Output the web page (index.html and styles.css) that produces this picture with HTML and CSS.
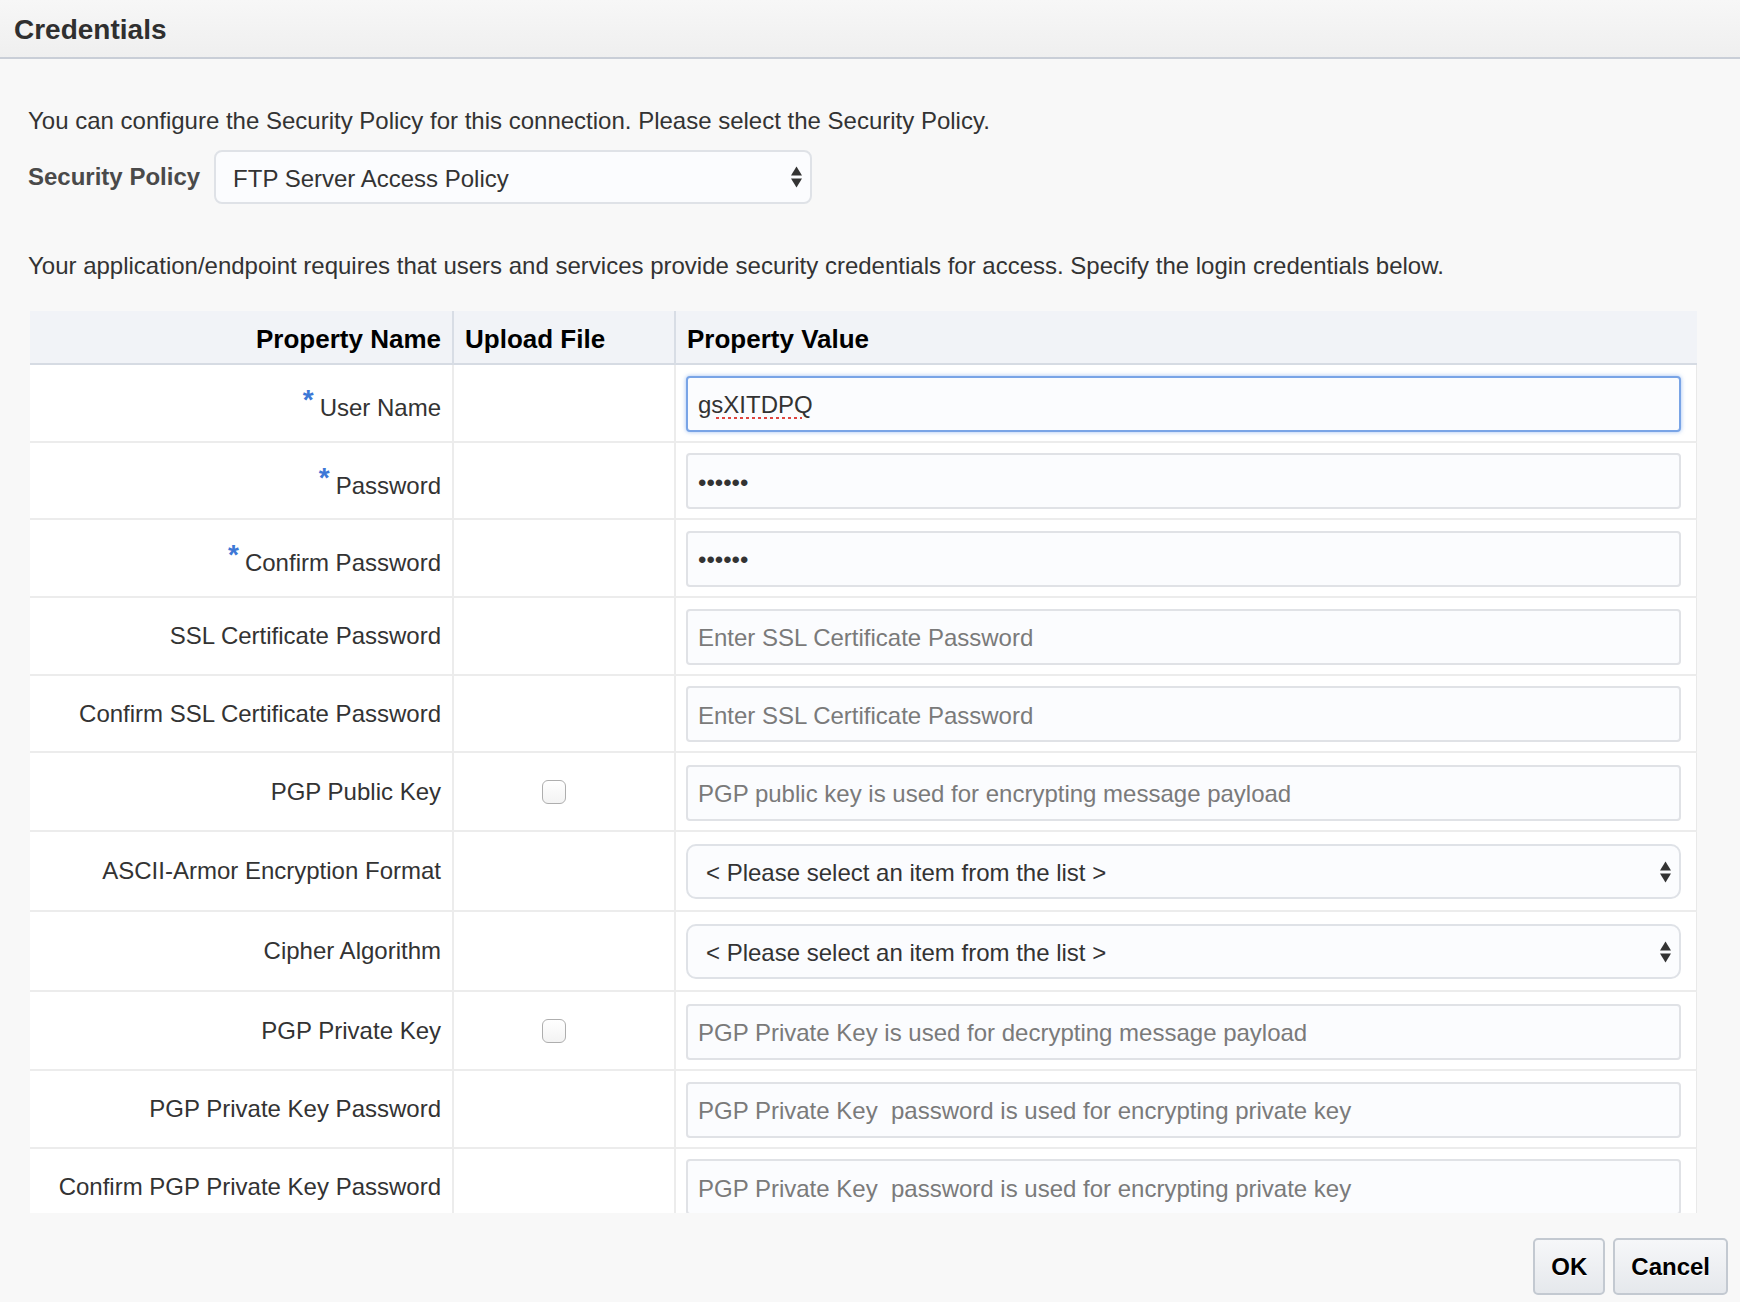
FILE: index.html
```html
<!DOCTYPE html>
<html lang="en">
<head>
<meta charset="utf-8">
<title>Credentials</title>
<link rel="stylesheet" href="styles.css">
</head>
<body>
<div class="dialog">
  <header class="titlebar"><h1 class="title">Credentials</h1></header>
  <main class="content">
    <p class="intro intro-first">You can configure the Security Policy for this connection. Please select the Security Policy.</p>
    <div class="policy-row">
      <label class="policy-label" for="policy">Security Policy</label>
      <div class="select-wrap policy-wrap">
        <select id="policy" class="select policy-select"><option>FTP Server Access Policy</option></select>
        <svg class="updown" width="11" height="22" viewBox="0 0 11 22" aria-hidden="true"><path d="M5.5 0.5L11 9.5H0Z"/><path d="M0 12.5H11L5.5 21.5Z"/></svg>
      </div>
    </div>
    <p class="intro intro-second">Your application/endpoint requires that users and services provide security credentials for access. Specify the login credentials below.</p>
    <div class="table-scroll">
      <table class="props">
        <colgroup><col class="col-name"><col class="col-upload"><col class="col-value"></colgroup>
        <thead>
          <tr><th class="c-name">Property Name</th><th class="c-upload">Upload File</th><th class="c-value">Property Value</th></tr>
        </thead>
        <tbody>
          <tr class="r-text">
            <td class="c-name"><span class="req">*</span>User Name</td><td class="c-upload"></td>
            <td class="c-value"><input class="field is-focused spell" type="text" value="gsXITDPQ"></td>
          </tr>
          <tr class="r-text">
            <td class="c-name"><span class="req">*</span>Password</td><td class="c-upload"></td>
            <td class="c-value"><input class="field" type="password" value="123456"></td>
          </tr>
          <tr class="r-text">
            <td class="c-name"><span class="req">*</span>Confirm Password</td><td class="c-upload"></td>
            <td class="c-value"><input class="field" type="password" value="123456"></td>
          </tr>
          <tr class="r-text">
            <td class="c-name">SSL Certificate Password</td><td class="c-upload"></td>
            <td class="c-value"><input class="field" type="text" placeholder="Enter SSL Certificate Password"></td>
          </tr>
          <tr class="r-text">
            <td class="c-name">Confirm SSL Certificate Password</td><td class="c-upload"></td>
            <td class="c-value"><input class="field" type="text" placeholder="Enter SSL Certificate Password"></td>
          </tr>
          <tr class="r-check">
            <td class="c-name">PGP Public Key</td><td class="c-upload"><input class="check" type="checkbox"></td>
            <td class="c-value"><input class="field" type="text" placeholder="PGP public key is used for encrypting message payload"></td>
          </tr>
          <tr class="r-select">
            <td class="c-name">ASCII-Armor Encryption Format</td><td class="c-upload"></td>
            <td class="c-value"><div class="select-wrap"><select class="select field-select"><option>&lt; Please select an item from the list &gt;</option></select><svg class="updown" width="11" height="22" viewBox="0 0 11 22" aria-hidden="true"><path d="M5.5 0.5L11 9.5H0Z"/><path d="M0 12.5H11L5.5 21.5Z"/></svg></div></td>
          </tr>
          <tr class="r-select">
            <td class="c-name">Cipher Algorithm</td><td class="c-upload"></td>
            <td class="c-value"><div class="select-wrap"><select class="select field-select"><option>&lt; Please select an item from the list &gt;</option></select><svg class="updown" width="11" height="22" viewBox="0 0 11 22" aria-hidden="true"><path d="M5.5 0.5L11 9.5H0Z"/><path d="M0 12.5H11L5.5 21.5Z"/></svg></div></td>
          </tr>
          <tr class="r-check">
            <td class="c-name">PGP Private Key</td><td class="c-upload"><input class="check" type="checkbox"></td>
            <td class="c-value"><input class="field" type="text" placeholder="PGP Private Key is used for decrypting message payload"></td>
          </tr>
          <tr class="r-text">
            <td class="c-name">PGP Private Key Password</td><td class="c-upload"></td>
            <td class="c-value"><input class="field" type="text" placeholder="PGP Private Key  password is used for encrypting private key"></td>
          </tr>
          <tr class="r-text">
            <td class="c-name">Confirm PGP Private Key Password</td><td class="c-upload"></td>
            <td class="c-value"><input class="field" type="text" placeholder="PGP Private Key  password is used for encrypting private key"></td>
          </tr>
        </tbody>
      </table>
    </div>
  </main>
  <footer class="footer">
    <button class="btn" type="button">OK</button>
    <button class="btn" type="button">Cancel</button>
  </footer>
</div>
</body>
</html>
```
FILE: styles.css
```css
* { box-sizing: border-box; }

html, body {
  margin: 0;
  padding: 0;
}

body {
  background: #f8f8f8;
  font-family: "Liberation Sans", Arial, Helvetica, sans-serif;
  font-size: 24px;
  color: #333;
}

.dialog {
  width: 1740px;
  height: 1302px;
  display: flex;
  flex-direction: column;
  overflow: hidden;
}

.titlebar {
  height: 59px;
  flex: none;
  background: linear-gradient(#f7f7f7, #efefef);
  border-bottom: 2px solid #c9ced7;
  display: flex;
  align-items: center;
  padding: 2px 0 0 14px;
}

.title {
  margin: 0;
  font-size: 28px;
  font-weight: bold;
  color: #2f2f2f;
  line-height: 55px;
}

.content {
  flex: none;
  padding: 0 43px 0 28px;
}

.intro {
  margin: 0;
  line-height: 30px;
  color: #333;
}

.intro-first { margin-top: 47px; }
.intro-second { margin-top: 47px; }

.policy-row {
  margin-top: 14px;
  height: 54px;
  display: flex;
  align-items: center;
  gap: 14px;
}

.policy-label {
  font-weight: bold;
  color: #4a4a4a;
  font-size: 24px;
}

.select-wrap {
  position: relative;
}

.policy-wrap { width: 598px; }

.select {
  appearance: none;
  -webkit-appearance: none;
  width: 100%;
  font-family: inherit;
  font-size: 24px;
  color: #333;
  background: #fbfcfe;
  border: 2px solid #dfe2e7;
  outline: none;
  margin: 0;
}

.policy-select {
  height: 54px;
  border-radius: 8px;
  padding: 2px 30px 0 17px;
}

.updown {
  position: absolute;
  right: 10px;
  top: 50%;
  transform: translateY(-50%);
  fill: #333;
}

.table-scroll {
  margin-top: 30px;
  margin-left: 2px;
  height: 902px;
  overflow: hidden;
}

.props {
  width: 1667px;
  table-layout: fixed;
  border-collapse: separate;
  border-spacing: 0;
}

.col-name { width: 424px; }
.col-upload { width: 222px; }
.col-value { width: 1021px; }

.props th {
  height: 54px;
  background: #f1f3f7;
  border-bottom: 2px solid #d6dbe3;
  font-size: 26px;
  font-weight: bold;
  color: #000;
  text-align: left;
  padding: 4px 11px 0;
  vertical-align: middle;
}

.props th.c-name {
  text-align: right;
  border-right: 2px solid #d8dde5;
}

.props th.c-upload {
  border-right: 2px solid #d8dde5;
}

.props td {
  background: #fff;
  border-bottom: 2px solid #ececec;
  vertical-align: middle;
}

.props td.c-name {
  text-align: right;
  padding: 0 11px 0 8px;
  border-right: 2px solid #ececec;
  color: #333;
  white-space: nowrap;
}

.props td.c-upload {
  border-right: 2px solid #ececec;
  padding: 0 0 0 88px;
}

.props td.c-value {
  padding-left: 10px;
  padding-right: 15px;
  border-right: 1px solid #e9e9e9;
}

.r-text td.c-value { padding-top: 10.5px; padding-bottom: 9.2px; }
.r-check td.c-value { padding-top: 11.5px; padding-bottom: 9.3px; }
.r-select td.c-value { padding-top: 12px; padding-bottom: 11px; }

.req {
  color: #3d78d6;
  font-weight: bold;
  font-size: 28px;
  vertical-align: 7px;
  margin-right: 6px;
}

.field {
  display: block;
  width: 100%;
  height: 56px;
  margin: 0;
  padding: 3px 10px 0;
  font-family: inherit;
  font-size: 24px;
  color: #333;
  background: #fbfcfe;
  border: 2px solid #e0e2e6;
  border-radius: 4px;
  outline: none;
}

.field::placeholder {
  color: #7a7a7a;
  opacity: 1;
}

.field.is-focused {
  border-color: #79a4e6;
  box-shadow: 0 0 4px rgba(80, 140, 230, 0.55);
}

.spell {
  text-decoration: underline dotted #e0453f;
  text-decoration-thickness: 3px;
  text-underline-offset: 4px;
}

.field-select {
  height: 55px;
  border-radius: 10px;
  padding: 1px 30px 0 18px;
}

.check {
  appearance: none;
  -webkit-appearance: none;
  display: block;
  width: 24px;
  height: 24px;
  margin: 0;
  border: 1.5px solid #aeaeae;
  border-radius: 6px;
  background: linear-gradient(#ffffff, #f3f3f3);
}

.footer {
  flex: none;
  display: flex;
  justify-content: flex-end;
  gap: 8px;
  padding: 25px 12px 0 0;
}

.btn {
  height: 57px;
  padding: 0 16px;
  font-family: inherit;
  font-size: 24px;
  font-weight: bold;
  color: #000;
  text-shadow: 0 1px 0 #fff;
  background: linear-gradient(#f6f7f9, #e5e8ec);
  border: 2px solid #c3c9d1;
  border-radius: 5px;
  margin: 0;
}
```
